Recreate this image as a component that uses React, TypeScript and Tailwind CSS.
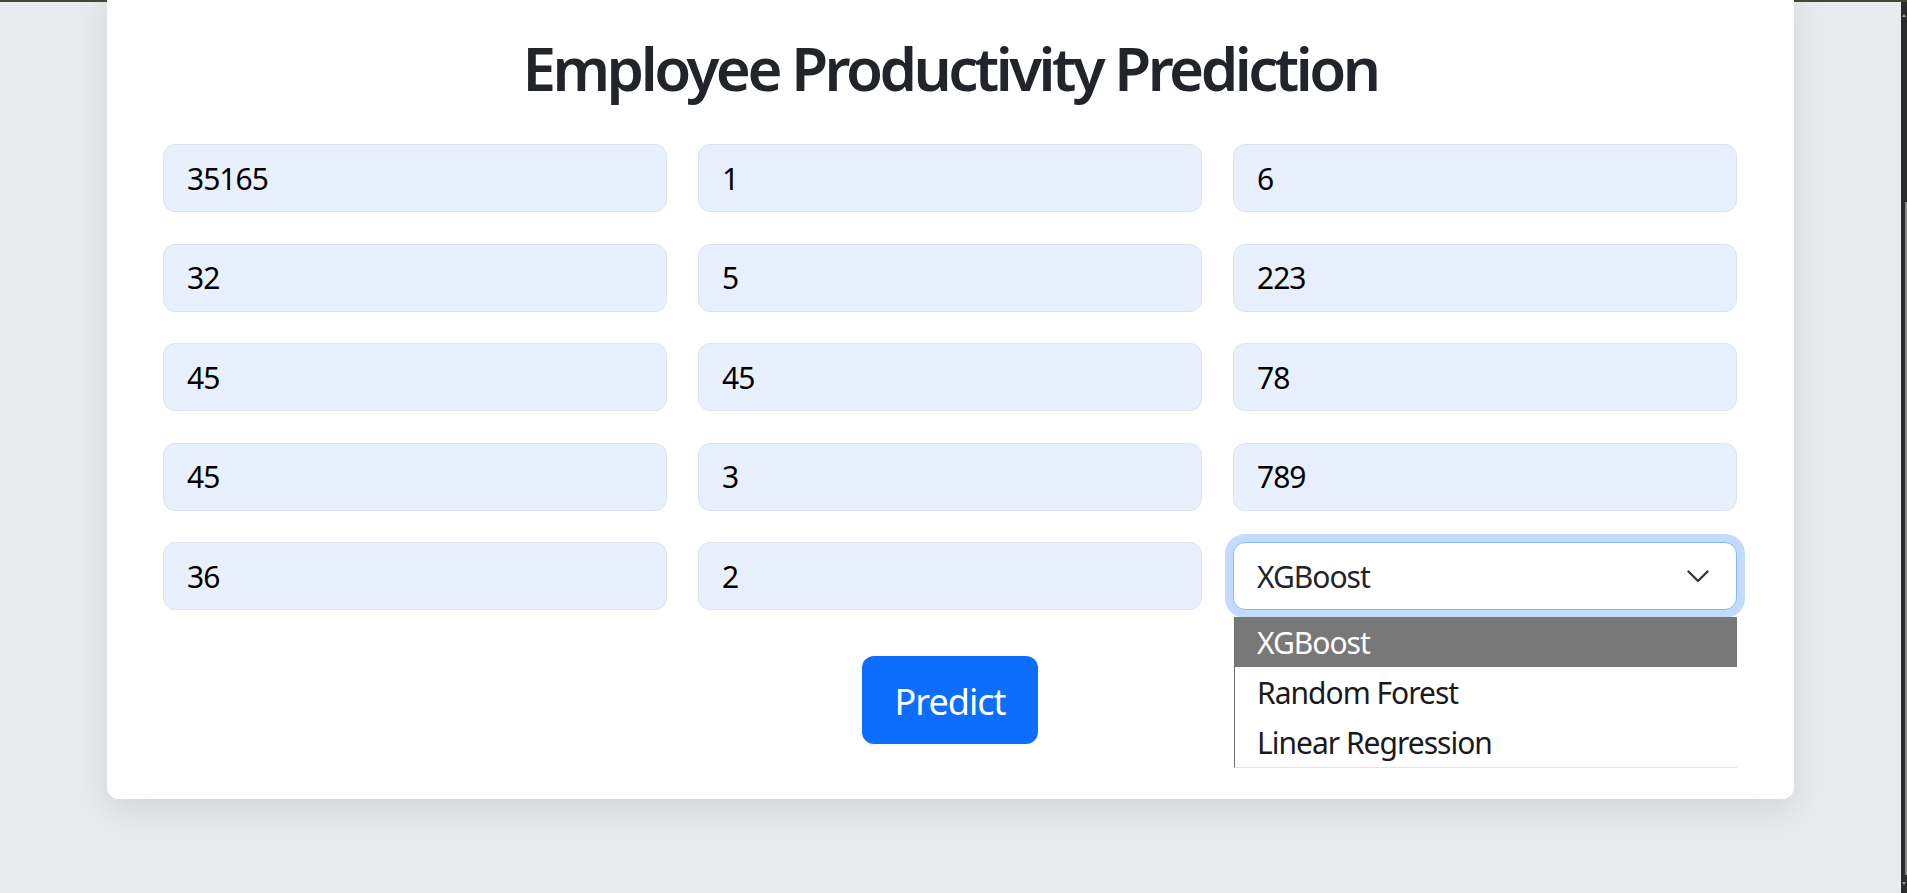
const rows = [
  ["35165", "1", "6"],
  ["32", "5", "223"],
  ["45", "45", "78"],
  ["45", "3", "789"],
  ["36", "2"],
];

const models = ["XGBoost", "Random Forest", "Linear Regression"];

const Field = ({ value }: { value: string }) => (
  <input
    readOnly
    value={value}
    className="h-[68px] w-full rounded-[12px] border border-[#dde3ec] bg-[#e8f0fe] px-[23px] text-[30px] tracking-[-1px] text-black outline-none"
  />
);

const ModelSelect = () => (
  <div className="relative">
    <div className="flex h-[68px] items-center justify-between rounded-[12px] border border-[#86b7fe] bg-white pl-[23px] pr-[27px] text-[30px] tracking-[-1px] text-[#212529] shadow-[0_0_0_8px_rgba(13,110,253,0.25)]">
      <span>XGBoost</span>
      <svg width="22" height="13" viewBox="0 0 22 13" fill="none">
        <path d="M1.5 1.5 11 11l9.5-9.5" stroke="#343a40" strokeWidth="2.4" strokeLinecap="round" strokeLinejoin="round" />
      </svg>
    </div>
    <div className="absolute left-[1px] right-0 top-[75px] z-10 border-b border-l border-b-[#e3e3e3] border-l-[#6f6f6f] bg-white">
      {models.map((m, i) => (
        <div
          key={m}
          className={
            i === 0
              ? "flex h-[50px] items-center bg-[#787878] pl-[22px] text-[30px] tracking-[-1px] text-white"
              : "flex h-[50px] items-center pl-[22px] text-[30px] tracking-[-1px] text-[#1a1a1a]"
          }
        >
          {m}
        </div>
      ))}
    </div>
  </div>
);

export default function App() {
  return (
    <div className="flex h-[893px] w-[1907px] flex-col overflow-hidden bg-[#e9ecef] font-['Noto_Sans',sans-serif]">
      <div className="h-[2px] shrink-0 bg-[#4a4539]" />
      <div className="flex min-h-0 flex-1">
        <main className="flex-1 px-[107px]">
          <div className="-mt-5 rounded-[12px] bg-white pb-[55px] pl-[56px] pr-[57px] pt-[48px] shadow-[0_12px_36px_rgba(0,0,0,0.1)]">
            <h1 className="mb-[38px] text-center text-[60px] font-semibold leading-[76px] tracking-[-3.5px] text-[#212529]">
              Employee Productivity Prediction
            </h1>

            <div className="grid grid-cols-3 gap-x-[31px] gap-y-[31.5px]">
              {rows.flat().map((v, i) => (
                <Field key={i} value={v} />
              ))}
              <ModelSelect />
            </div>

            <div className="mt-[46px] flex justify-center">
              <button className="flex h-[88px] items-center rounded-[12px] bg-[#0d6efd] px-[33px] pt-[4px] text-[36px] leading-none tracking-[-1px] text-white">
                Predict
              </button>
            </div>
          </div>
        </main>

        <div className="relative w-[6px] shrink-0 bg-[#2b2b2b]">
          <div className="absolute left-[1px] top-[12px] h-0 w-0 border-x-[2px] border-b-[3px] border-x-transparent border-b-[#9a9a9a]" />
          <div className="absolute bottom-[18px] right-0 top-[200px] w-[2px] bg-[#8a8a8a]" />
          <div className="absolute bottom-[8px] left-[1px] h-0 w-0 border-x-[2px] border-t-[3px] border-x-transparent border-t-[#9a9a9a]" />
        </div>
      </div>
    </div>
  );
}
